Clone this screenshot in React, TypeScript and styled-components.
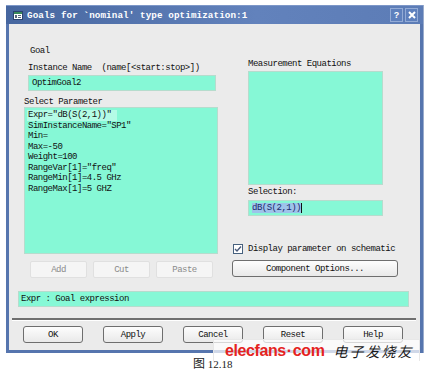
import styled, { createGlobalStyle } from "styled-components";

const GlobalStyle = createGlobalStyle`
	body {
		margin: 0;
		background: #ffffff;
		font-family: "Liberation Mono", "DejaVu Sans Mono", monospace;
	}
`;

const aqua = "#86f8d6";

const params = [
	'Expr="dB(S(2,1))"',
	'SimInstanceName="SP1"',
	"Min=",
	"Max=-50",
	"Weight=100",
	'RangeVar[1]="freq"',
	"RangeMin[1]=4.5 GHz",
	"RangeMax[1]=5 GHZ",
];

const footerButtons = ["OK", "Apply", "Cancel", "Reset", "Help"];

export default function App() {
	return (
		<Page>
			<GlobalStyle />
			<Window>
				<TitleBar>
					<AppIcon viewBox="0 0 10 9">
						<rect x="0.5" y="0.5" width="9" height="8" fill="#ffffff" stroke="#2c4470" />
						<rect x="1" y="1" width="8" height="2" fill="#3a8a5a" />
						<rect x="2" y="4" width="2" height="3" fill="#5a6a7a" />
						<rect x="5" y="4" width="3" height="1" fill="#5a6a7a" />
						<rect x="5" y="6" width="3" height="1" fill="#5a6a7a" />
					</AppIcon>
					<Title>Goals for `nominal' type optimization:1</Title>
					<CaptionButtons>
						<CaptionButton>?</CaptionButton>
						<CaptionButton>
							<svg width="8" height="8" viewBox="0 0 8 8">
								<path d="M1 1 L7 7 M7 1 L1 7" stroke="#ffffff" strokeWidth="2" />
							</svg>
						</CaptionButton>
					</CaptionButtons>
				</TitleBar>
				<Content>
					<Columns>
						<LeftColumn>
							<Label $indent={6} $top={22}>Goal</Label>
							<Label $indent={4} $top={7}>Instance Name  (name[&lt;start:stop&gt;])</Label>
							<Field $indent={4} $width={188} $top={2}>OptimGoal2</Field>
							<Label $indent={0} $top={6}>Select Parameter</Label>
							<ParamList>
								{params.map((p, i) => (
									<ParamRow key={p} $selected={i === 0}>{p}</ParamRow>
								))}
							</ParamList>
							<EditButtons>
								<DisabledButton>Add</DisabledButton>
								<DisabledButton>Cut</DisabledButton>
								<DisabledButton>Paste</DisabledButton>
							</EditButtons>
						</LeftColumn>
						<RightColumn>
							<Label $indent={16} $top={35}>Measurement Equations</Label>
							<EquationBox />
							<Label $indent={16} $top={2}>Selection:</Label>
							<Field $indent={16} $width={135} $top={3}>
								<Selected>dB(S(2,1))</Selected>
								<Caret />
							</Field>
							<CheckRow>
								<CheckBox>
									<svg width="8" height="8" viewBox="0 0 8 8">
										<path d="M1 4 L3 6 L7 1.5" fill="none" stroke="#4a5a7a" strokeWidth="1.4" />
									</svg>
								</CheckBox>
								<span>Display parameter on schematic</span>
							</CheckRow>
							<WideButton>Component Options...</WideButton>
						</RightColumn>
					</Columns>
					<ExprBar>Expr : Goal expression</ExprBar>
				</Content>
				<Footer>
					{footerButtons.map((b) => (
						<DialogButton key={b}>{b}</DialogButton>
					))}
				</Footer>
			</Window>
			<Caption>
				<span>图</span> 12.18
			</Caption>
			<Watermark>
				<Brand>
					elecfans<Dot>·</Dot>com
				</Brand>
				<BrandCn>电子发烧友</BrandCn>
			</Watermark>
		</Page>
	);
}

const Page = styled.div`
	position: relative;
	width: 427px;
	height: 373px;
	padding: 5px 0 0 6px;
	box-sizing: border-box;
	overflow: hidden;
`;

const Window = styled.div`
	width: 417px;
	box-sizing: border-box;
	background: #ebebeb;
	border: 3px solid #5675ae;
	border-top: 0;
	box-shadow: 1px 0 0 #9aaccc;
`;

const TitleBar = styled.div`
	height: 19px;
	margin: 0 -3px;
	padding: 0 5px 0 7px;
	display: flex;
	align-items: center;
	gap: 4px;
	background: linear-gradient(to right, #46669f, #6282bc 60%, #5c7cb6);
	border-top: 1px solid #7d97c8;
	box-sizing: border-box;
`;

const AppIcon = styled.svg`
	width: 10px;
	height: 9px;
	flex: none;
`;

const Title = styled.div`
	flex: 1;
	color: #ffffff;
	font-weight: bold;
	font-size: 9.25px;
	letter-spacing: 0.1px;
	white-space: pre;
`;

const CaptionButtons = styled.div`
	display: flex;
	gap: 2px;
`;

const CaptionButton = styled.div`
	width: 11px;
	height: 12px;
	display: flex;
	align-items: center;
	justify-content: center;
	background: #5e80bd;
	border: 1px solid #93abd6;
	color: #ffffff;
	font-family: "Liberation Sans", sans-serif;
	font-weight: bold;
	font-size: 9px;
`;

const Content = styled.div`
	padding: 0 8px 11px 9px;
	color: #111111;
	font-size: 9px;
	letter-spacing: -0.5px;
`;

const Columns = styled.div`
	display: grid;
	grid-template-columns: 194px 166px;
	column-gap: 14px;
	margin-left: 6px;
	align-items: start;
`;

const LeftColumn = styled.div`
	display: flex;
	flex-direction: column;
`;

const RightColumn = styled.div`
	display: flex;
	flex-direction: column;
`;

const Label = styled.div<{ $indent: number; $top: number }>`
	height: 10px;
	line-height: 10px;
	margin: ${(p) => p.$top}px 0 0 ${(p) => p.$indent}px;
	white-space: pre;
`;

const Field = styled.div<{ $indent: number; $width: number; $top: number }>`
	display: flex;
	align-items: center;
	width: ${(p) => p.$width}px;
	height: 16px;
	margin: ${(p) => p.$top}px 0 0 ${(p) => p.$indent}px;
	padding-left: 3px;
	box-sizing: border-box;
	background: ${aqua};
	border: 1px solid #b6dccd;
`;

const Selected = styled.span`
	background: #9ec3ea;
	color: #1c2c6c;
`;

const Caret = styled.span`
	width: 1px;
	height: 10px;
	background: #111111;
`;

const ParamList = styled.div`
	height: 147px;
	padding: 2px 0 0 2px;
	box-sizing: border-box;
	background: ${aqua};
	border: 1px solid #b6dccd;
	display: flex;
	flex-direction: column;
	align-items: flex-start;
`;

const ParamRow = styled.div<{ $selected: boolean }>`
	height: 10.5px;
	line-height: 10.5px;
	padding: 0 6px 0 1px;
	background: ${(p) => (p.$selected ? "#b4fbe6" : "transparent")};
	white-space: pre;
`;

const EditButtons = styled.div`
	display: flex;
	gap: 6px;
	margin: 7px 0 0 6px;
`;

const DisabledButton = styled.div`
	width: 57px;
	height: 17px;
	display: flex;
	align-items: center;
	justify-content: center;
	box-sizing: border-box;
	background: #f5f5f5;
	border: 1px solid #e0e0e0;
	border-radius: 2px;
	color: #8a8a8a;
`;

const EquationBox = styled.div`
	width: 135px;
	height: 114px;
	margin: 2px 0 0 16px;
	box-sizing: border-box;
	background: ${aqua};
	border: 1px solid #b6dccd;
`;

const CheckRow = styled.div`
	display: flex;
	align-items: center;
	gap: 5px;
	height: 10px;
	margin: 28px 0 0 1px;
`;

const CheckBox = styled.div`
	width: 10px;
	height: 10px;
	box-sizing: border-box;
	display: flex;
	align-items: center;
	justify-content: center;
	background: #ffffff;
	border: 1px solid #47617e;
`;

const buttonLook = `
	height: 17px;
	display: flex;
	align-items: center;
	justify-content: center;
	box-sizing: border-box;
	background: linear-gradient(#fdfdfd, #e9e9e9);
	border: 1px solid #6e6e6e;
	border-radius: 3px;
	color: #111111;
`;

const WideButton = styled.div`
	${buttonLook}
	width: 166px;
	margin-top: 6px;
`;

const ExprBar = styled.div`
	height: 16px;
	width: 391px;
	margin-top: 13px;
	padding-left: 2px;
	display: flex;
	align-items: center;
	box-sizing: border-box;
	background: ${aqua};
	border: 1px solid #b6dccd;
	white-space: pre;
`;

const Footer = styled.div`
	margin: 0 4px 0 3px;
	padding: 6px 0 7px 11px;
	display: flex;
	gap: 20px;
	border-top: 2px solid #6f6f6f;
	box-shadow: inset 0 1px 0 #ffffff;
	font-size: 9px;
	letter-spacing: -0.5px;
`;

const DialogButton = styled.div`
	${buttonLook}
	width: 60px;
`;

const Caption = styled.div`
	position: absolute;
	left: 193px;
	top: 354px;
	font-family: "Liberation Serif", "Noto Sans CJK SC", serif;
	font-size: 11px;
	color: #222222;
	span {
		font-family: "Noto Sans CJK SC", sans-serif;
		font-size: 12px;
	}
`;

const Watermark = styled.div`
	position: absolute;
	left: 213px;
	top: 339px;
	width: 207px;
	height: 22px;
	display: flex;
	align-items: flex-end;
	gap: 9px;
	padding-left: 11px;
	box-sizing: border-box;
	background: rgba(255, 255, 255, 0.72);
	border: 1px solid rgba(230, 230, 230, 0.9);
	border-bottom: 0;
`;

const Brand = styled.div`
	font-family: "Liberation Sans", sans-serif;
	font-weight: bold;
	font-size: 16px;
	letter-spacing: -0.4px;
	line-height: 16px;
	color: #e5231e;
	margin-bottom: 2px;
`;

const Dot = styled.span`
	margin: 0 1px;
`;

const BrandCn = styled.div`
	font-family: "Noto Sans CJK SC", sans-serif;
	font-size: 14px;
	line-height: 16px;
	letter-spacing: 2px;
	color: #1a1a1a;
	margin-bottom: 2px;
	font-style: italic;
`;
